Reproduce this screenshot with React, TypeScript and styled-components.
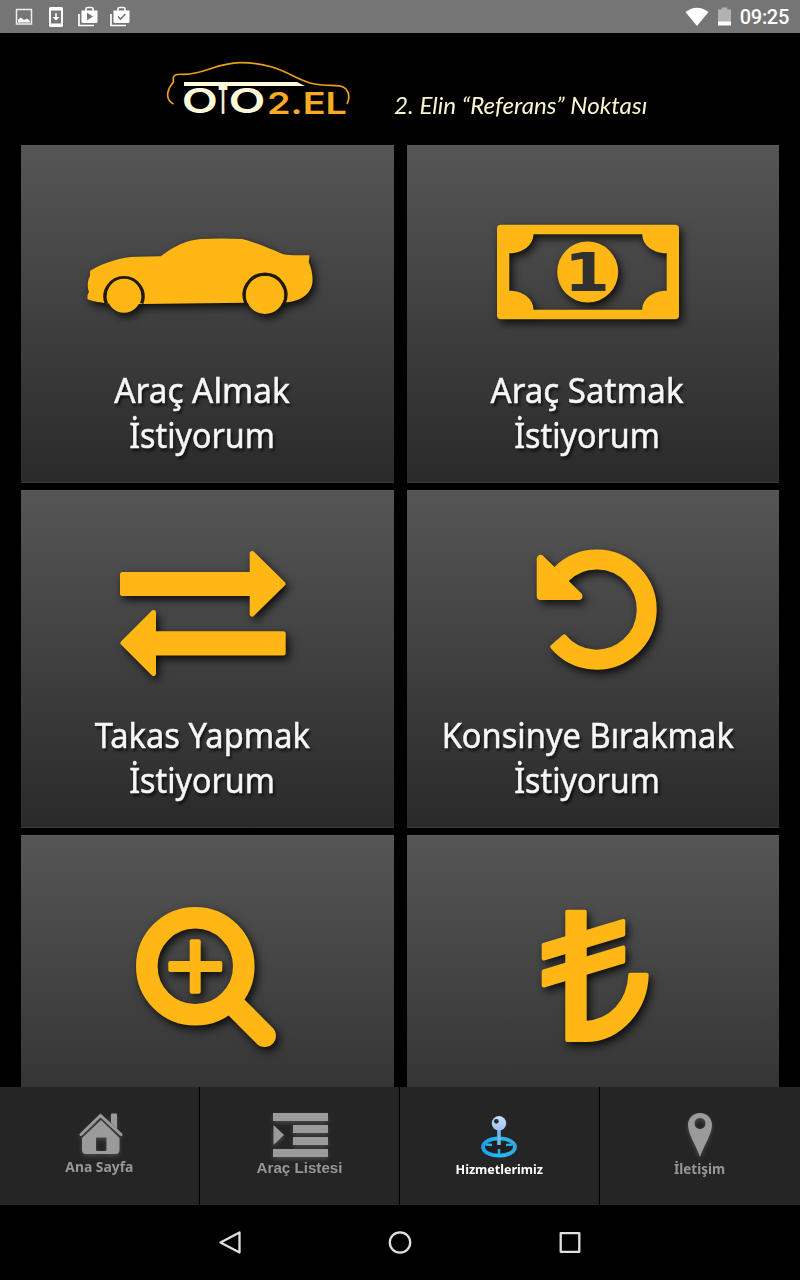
import React from "react";
import styled, { createGlobalStyle } from "styled-components";

const GlobalStyle = createGlobalStyle`
  body { margin: 0; background: #000; }
  * { box-sizing: border-box; }
  svg { display: block; flex: none; }
`;

const AMBER = "#ffb716";

const Screen = styled.div`
  width: 800px;
  height: 1280px;
  display: flex;
  flex-direction: column;
  background: #000;
  overflow: hidden;
  font-family: "Noto Sans", sans-serif;
`;

const StatusBar = styled.div`
  height: 33px;
  flex: none;
  display: flex;
  align-items: center;
  justify-content: space-between;
  padding: 0 11px 0 12px;
  background: #757575;
`;

const StatusGroup = styled.div<{ $gap?: number }>`
  display: flex;
  align-items: center;
  gap: ${(p) => p.$gap ?? 0}px;
`;

const Clock = styled.span`
  color: #fff;
  font: 500 20px/33px Roboto, sans-serif;
  letter-spacing: -0.3px;
  padding-top: 2px;
`;

const Header = styled.header`
  height: 112px;
  flex: none;
  display: flex;
  padding-left: 160px;
`;

const Tagline = styled.div<{ $scale: number }>`
  margin: 56px 0 0 34px;
  height: 32px;
  white-space: nowrap;
  color: #f8f5d0;
  font: italic 400 23px/32px Lato, sans-serif;
  transform: scaleX(${(p) => p.$scale});
  transform-origin: 0 50%;
`;

const Grid = styled.main`
  height: 942px;
  flex: none;
  overflow: hidden;
  display: grid;
  grid-template-columns: 373px 372px;
  grid-auto-rows: 338px;
  gap: 7px 13px;
  padding: 0 21px;
`;

const Card = styled.section`
  display: flex;
  flex-direction: column;
  background: linear-gradient(#555 0, #454545 38%, #2a2a2a 100%);
  border-top: 1px solid #5b5b5b;
  border-bottom: 1px solid #3b3b3b;
  overflow: hidden;
`;

const CardArt = styled.svg`
  width: 373px;
  height: 220px;
  margin-top: -1px;
  overflow: visible;
  filter: drop-shadow(3px 4px 4px rgba(0, 0, 0, 0.8));
`;

const Caption = styled.div`
  display: flex;
  flex-direction: column;
  align-items: center;
  padding-right: 11px;
  margin-top: 2px;
`;

const CaptionLine = styled.div<{ $scale: number }>`
  height: 45px;
  white-space: nowrap;
  color: #f6f6f6;
  font-size: 35px;
  line-height: 45px;
  -webkit-text-stroke: 0.5px #f6f6f6;
  text-shadow: 2px 3px 3px rgba(0, 0, 0, 0.7);
  transform: scaleX(${(p) => p.$scale});
`;

const TabBar = styled.nav`
  height: 118px;
  flex: none;
  display: grid;
  grid-template-columns: repeat(4, 200px);
  background: #252525;
`;

const Tab = styled.div`
  display: flex;
  flex-direction: column;
  align-items: center;
  border-right: 1px solid #000;
  &:last-child { border-right: 0; }
`;

const TabArt = styled.svg<{ $flat?: boolean }>`
  width: 80px;
  height: 74px;
  filter: ${(p) => (p.$flat ? "none" : "drop-shadow(0 2px 2px rgba(160, 160, 160, 0.3))")};
`;

const TabLabel = styled.span<{ $active?: boolean; $sans?: boolean; $size: number; $top: number; $scale: number }>`
  margin-top: ${(p) => p.$top}px;
  height: 20px;
  white-space: nowrap;
  font-family: ${(p) => (p.$sans ? '"Liberation Sans"' : '"Noto Sans"')}, sans-serif;
  font-weight: 700;
  font-size: ${(p) => p.$size}px;
  line-height: 20px;
  color: ${(p) => (p.$active ? "#fff" : "#979797")};
  transform: scaleX(${(p) => p.$scale});
`;

const SystemBar = styled.footer`
  height: 75px;
  flex: none;
  display: flex;
  align-items: center;
  justify-content: center;
  gap: 140px;
`;

const Logo = () => (
  <svg width="200" height="100" viewBox="160 33 200 100" fill="none">
    <path d="M173.5 104C163 98 169 87 173.5 82C172 75 175 74 183 74.3C203 75 216 63 240 62.7C281 62.5 295 81 315 84C329 87 340 83 346 89C350 94 349 100 347 104" stroke="#eba01d" strokeWidth="1.7" />
    <path d="M184 82H297L305 86H184Z" fill="#fdf9d8" />
    <g fontFamily="Inter, sans-serif" fontWeight="600" fill="#fdf9d8">
      <text x="181.8" y="113.3" fontSize="34" textLength="36.200" lengthAdjust="spacingAndGlyphs">O</text>
      <text x="218.6" y="113.3" fontSize="38" textLength="9" lengthAdjust="spacingAndGlyphs" stroke="#fdf9d8" strokeWidth="1.600">T</text>
      <text x="228.4" y="113.3" fontSize="34" textLength="37" lengthAdjust="spacingAndGlyphs">O</text>
    </g>
    <text x="267" y="113.5" fontFamily="Inter, sans-serif" fontWeight="600" fontSize="30.5" fill="#f9ab22" textLength="80" lengthAdjust="spacingAndGlyphs">2.EL</text>
  </svg>
);

const CarArt = () => (
  <CardArt viewBox="0 0 373 220" fill={AMBER}>
    <path d="M69 126C83 117 101 112 116 111.7L139.7 111.3C152 102 165 95 180 94C194 93.2 207 93.2 221 94C234 97 250 104 262.3 109.3C271 111 280 110 288.5 110.3L287.7 117C291 124 292.500 134 291 140C288 151 278 156 266 157.300L224 157.700L122 159L85 158.300C77 157 70 156 66.500 154V150L68 147C66 142 66.500 135 69 131Z" />
    <path d="M85.300 158.500A19 19 0 1 1 120.700 158.500M225 158.500A20.800 20.800 0 1 1 263 158.500" fill="none" stroke="#21190a" strokeWidth="3.400" />
    <circle cx="103" cy="150.700" r="17" />
    <circle cx="244" cy="150" r="19" />
  </CardArt>
);

const MoneyArt = () => (
  <CardArt viewBox="0 0 373 220" fill={AMBER}>
    <path fillRule="evenodd" d="M94 79.700H268a4 4 0 0 1 4 4V170.300a4 4 0 0 1-4 4H94a4 4 0 0 1-4-4V83.700a4 4 0 0 1 4-4ZM126.500 89.300C126 101 115 108.300 102.300 108.300V145.700C115 145.700 126.500 153 126.500 164.700H235.300C235.300 153 247 145.700 259.700 145.700V108.300C247 108.300 235.300 101 235.300 89.300Z" />
    <circle cx="180.700" cy="127" r="30.500" />
    <text x="157" y="145.700" fontFamily="DejaVu Sans" fontWeight="700" fontSize="54" textLength="46" lengthAdjust="spacingAndGlyphs" fill="#30302e">1</text>
  </CardArt>
);

const SwapArt = () => (
  <CardArt viewBox="0 0 373 220" fill={AMBER} stroke={AMBER} strokeWidth="5" strokeLinejoin="round">
    <path d="M101.500 84.500H231.200V63.500L262 93.700L231.200 124V103.500H101.500Z" />
    <path d="M262.200 143.700H132.500V122.500L102 153L132.500 183.500V163H262.200Z" />
  </CardArt>
);

const UndoArt = () => (
  <CardArt viewBox="0 0 373 220" fill={AMBER} stroke={AMBER} strokeLinejoin="round">
    <path d="M154.300 84.300A50 50 0 1 1 151.600 152" fill="none" strokeWidth="20" />
    <path d="M157.300 146.300L145.200 156.800" strokeWidth="4" strokeLinecap="round" />
    <path d="M133.700 69V106H171.500Z" strokeWidth="8" />
  </CardArt>
);

const ZoomArt = () => (
  <CardArt viewBox="0 0 373 220" fill={AMBER} stroke={AMBER}>
    <circle cx="174.300" cy="131.300" r="48.500" strokeWidth="21.600" fill="none" />
    <path d="M212 169L243.700 200.700" strokeWidth="22.500" strokeLinecap="round" />
    <rect x="147.300" y="126" width="54" height="11" rx="2" stroke="none" />
    <rect x="168.700" y="104.300" width="11" height="54.400" rx="2" stroke="none" />
  </CardArt>
);

const LiraArt = () => (
  <CardArt viewBox="0 0 373 220" fill={AMBER} stroke={AMBER} strokeWidth="4" strokeLinejoin="round">
    <path d="M160.300 76.700H177.700V188C204 187 222 167 223.300 139.700H239.700C239 174 213 205 179 205H160.300Z" />
    <path d="M136.700 110L216.300 86V99.500L136.700 123.500ZM136.700 136.500L216.300 112.500V126.500L136.700 150.500Z" />
  </CardArt>
);

const PictureIcon = () => (
  <svg width="24" height="24" viewBox="0 0 24 24">
    <path d="M4.500 4.500H19.500V19H4.500Z" fill="none" stroke="#eee" strokeWidth="1.500" />
    <path d="M6 17.500V14.500L9 12.500L12 15L15 13.500L18 16V17.500Z" fill="#fff" />
  </svg>
);

const DownloadIcon = () => (
  <svg width="24" height="24" viewBox="0 0 24 24">
    <path fillRule="evenodd" fill="#fff" d="M6.500 2H17.500a1.500 1.500 0 0 1 1.500 1.500V20.500a1.500 1.500 0 0 1-1.500 1.500H6.500A1.500 1.500 0 0 1 5 20.500V3.500A1.500 1.500 0 0 1 6.500 2ZM7 5.500V18.500H17V5.500ZM11.200 8H12.800V12H15.500L12 15.500L8.500 12H11.200Z" />
  </svg>
);

const StoreIcon = ({ check }: { check?: boolean }) => (
  <svg width="24" height="24" viewBox="0 0 24 24">
    <path d="M3 9V20.500H18" fill="none" stroke="#fff" strokeWidth="1.700" />
    <path d="M10 6V3.700Q10 2.500 11.200 2.500H15.800Q17 2.500 17 3.700V6" fill="none" stroke="#fff" strokeWidth="1.600" />
    <path d="M5.500 5.500H21.500V16.500a1.500 1.500 0 0 1-1.500 1.500H7a1.500 1.500 0 0 1-1.500-1.500Z" fill="#fff" />
    {check ? <path d="M10 11.500L12.500 14L17.500 9" fill="none" stroke="#757575" strokeWidth="1.600" /> : <path d="M11 7.800V15.200L17 11.500Z" fill="#757575" />}
  </svg>
);

const cards = [
  { art: <CarArt />, title: "Araç Almak", scale: 0.955 },
  { art: <MoneyArt />, title: "Araç Satmak", scale: 0.945 },
  { art: <SwapArt />, title: "Takas Yapmak", scale: 0.933 },
  { art: <UndoArt />, title: "Konsinye Bırakmak", scale: 0.932 },
  { art: <ZoomArt />, title: "", scale: 1 },
  { art: <LiraArt />, title: "", scale: 1 },
];

export default function App() {
  return (
    <Screen>
      <GlobalStyle />
      <StatusBar>
        <StatusGroup $gap={8}>
          <PictureIcon />
          <DownloadIcon />
          <StoreIcon />
          <StoreIcon check />
        </StatusGroup>
        <StatusGroup $gap={8}>
          <svg width="24" height="20" viewBox="0 0 24 20"><path d="M0.500 5Q12-3.500 23.500 5L12 19Z" fill="#fff" /></svg>
          <svg width="15" height="20" viewBox="0 0 15 20"><path d="M1 2.500H4.700V0.500H10.300V2.500H14V15H1Z" fill="#b2b2b2" /><path d="M1 14.500H14V18.500H1Z" fill="#fff" /></svg>
          <Clock>09:25</Clock>
        </StatusGroup>
      </StatusBar>
      <Header>
        <Logo />
        <Tagline $scale={1.053}>2. Elin “Referans” Noktası</Tagline>
      </Header>
      <Grid>
        {cards.map((c, i) => (
          <Card key={i}>
            {c.art}
            {c.title && (
              <Caption>
                <CaptionLine $scale={c.scale}>{c.title}</CaptionLine>
                <CaptionLine $scale={0.922}>İstiyorum</CaptionLine>
              </Caption>
            )}
          </Card>
        ))}
      </Grid>
      <TabBar>
        <Tab>
          <TabArt viewBox="60 1087 80 74" fill="#9b9b9b">
            <path d="M81 1134.500L100.500 1115.500L121 1134.500" fill="none" stroke="#9b9b9b" strokeWidth="3" strokeLinecap="round" />
            <path d="M111 1114.500a1 1 0 0 1 1-1h4a1 1 0 0 1 1 1V1129L111 1123Z" />
            <path fillRule="evenodd" d="M101 1120L119.500 1138V1150q0 4-4 4H86q-4 0-4-4V1138ZM97 1137.500q-1 0-1 1V1150q0 1 1 1h8.500q1 0 1-1V1138.500q0-1-1-1Z" />
          </TabArt>
          <TabLabel $size={14} $top={-4} $scale={0.99}>Ana Sayfa</TabLabel>
        </Tab>
        <Tab>
          <TabArt viewBox="260 1087 80 74" fill="#9b9b9b">
            <path d="M273 1113H328V1121H273ZM293 1125H328V1133H293ZM293 1137H328V1145H293ZM273 1149H328V1157H273ZM273.500 1125L284 1135L273.500 1145Z" />
          </TabArt>
          <TabLabel $sans $size={15} $top={-3} $scale={1.01}>Araç Listesi</TabLabel>
        </Tab>
        <Tab>
          <TabArt $flat viewBox="460 1087 80 74">
            <defs>
              <linearGradient id="pin" x2="0" y2="1"><stop stopColor="#c6dcf9" /><stop offset="1" stopColor="#9dc3f0" /></linearGradient>
              <linearGradient id="ring" x2="1"><stop stopColor="#1e9fe8" /><stop offset=".5" stopColor="#20bdf6" /><stop offset="1" stopColor="#39a7e6" /></linearGradient>
            </defs>
            <ellipse cx="499" cy="1147" rx="16" ry="8.700" fill="#202020" stroke="url(#ring)" strokeWidth="3.800" />
            <path d="M486 1144.500L492 1145M506 1145L512 1144.500M499 1149V1155" stroke="#20b3ee" strokeWidth="2.400" />
            <path d="M497.200 1129H500.800V1145H497.200Z" fill="#6fb7ed" />
            <circle cx="499" cy="1123.300" r="7.200" fill="url(#pin)" />
            <circle cx="496.300" cy="1121.300" r="2.400" fill="#222c36" />
          </TabArt>
          <TabLabel $active $size={13} $top={-2} $scale={0.965}>Hizmetlerimiz</TabLabel>
        </Tab>
        <Tab>
          <TabArt viewBox="660 1087 80 74" fill="#9b9b9b">
            <path fillRule="evenodd" d="M700 1113C707 1113 712 1118.500 712 1125C712 1134 704 1145 700 1157C696 1145 688 1134 688 1125C688 1118.500 693 1113 700 1113ZM700 1118a5.500 5.500 0 1 0 .01 0Z" />
          </TabArt>
          <TabLabel $size={14} $top={-2} $scale={0.96}>İletişim</TabLabel>
        </Tab>
      </TabBar>
      <SystemBar>
        <svg width="30" height="30" viewBox="0 0 30 30" fill="none" stroke="#e0e0e0" strokeWidth="2.300" strokeLinejoin="round"><path d="M24.500 4.500V24.500L5.500 14.500Z" /></svg>
        <svg width="30" height="30" viewBox="0 0 30 30" fill="none" stroke="#e0e0e0" strokeWidth="2.300"><circle cx="15" cy="14.500" r="10.200" /></svg>
        <svg width="30" height="30" viewBox="0 0 30 30" fill="none" stroke="#e0e0e0" strokeWidth="2.300" strokeLinejoin="round"><path d="M5.700 5.200H24.300V23.800H5.700Z" /></svg>
      </SystemBar>
    </Screen>
  );
}
